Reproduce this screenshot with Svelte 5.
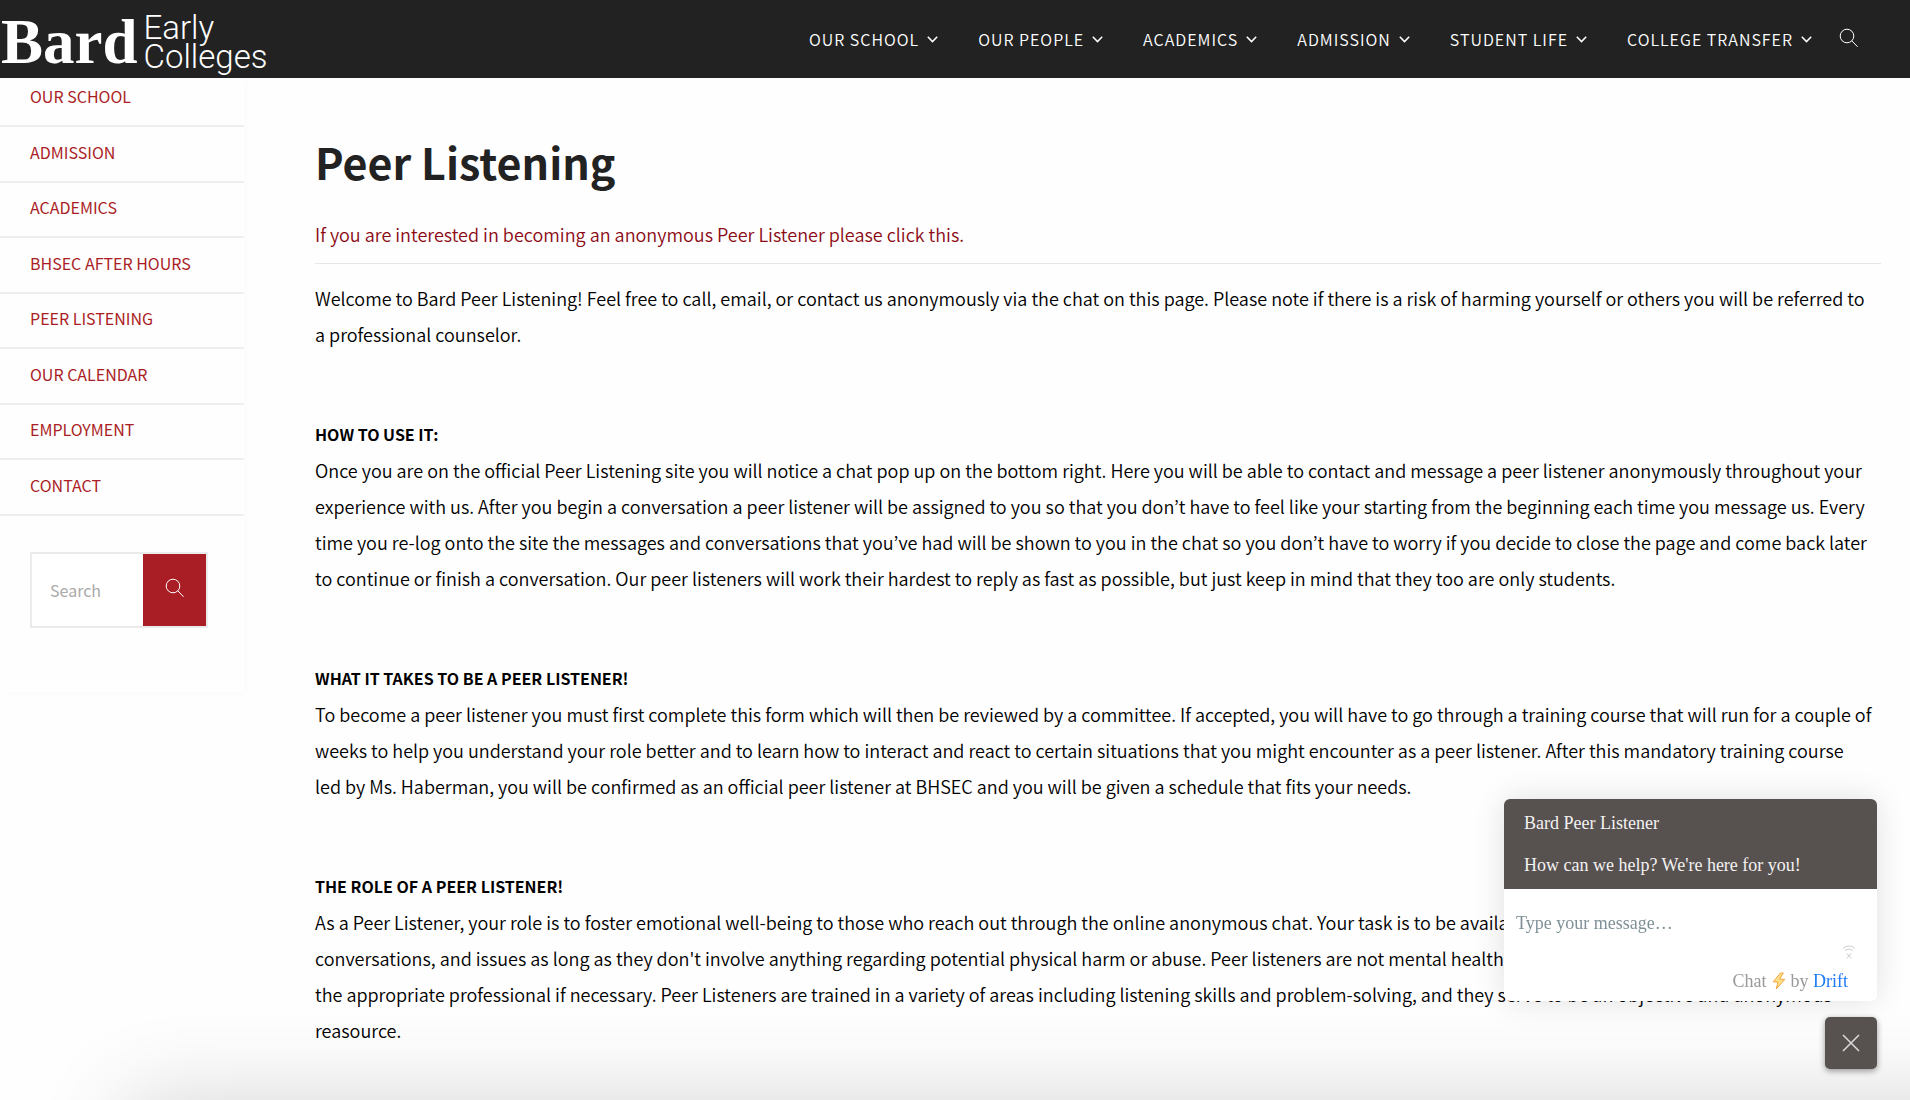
<script>
  const topLinks = ['Our School', 'Our People', 'Academics', 'Admission', 'Student Life', 'College Transfer'];
  const sideLinks = ['Our School', 'Admission', 'Academics', 'BHSEC After Hours', 'Peer Listening', 'Our Calendar', 'Employment', 'Contact'];
  const welcome = `Welcome to Bard Peer Listening! Feel free to call, email, or contact us anonymously via the chat on this page. Please note if there is a risk of harming yourself or others you will be referred to
a professional counselor.`;
  const sections = [
    {
      title: 'How to use it:',
      text: `Once you are on the official Peer Listening site you will notice a chat pop up on the bottom right. Here you will be able to contact and message a peer listener anonymously throughout your
experience with us. After you begin a conversation a peer listener will be assigned to you so that you don’t have to feel like your starting from the beginning each time you message us. Every
time you re-log onto the site the messages and conversations that you’ve had will be shown to you in the chat so you don’t have to worry if you decide to close the page and come back later
to continue or finish a conversation. Our peer listeners will work their hardest to reply as fast as possible, but just keep in mind that they too are only students.`
    },
    {
      title: 'What it takes to be a Peer Listener!',
      text: `To become a peer listener you must first complete this form which will then be reviewed by a committee. If accepted, you will have to go through a training course that will run for a couple of
weeks to help you understand your role better and to learn how to interact and react to certain situations that you might encounter as a peer listener. After this mandatory training course
led by Ms. Haberman, you will be confirmed as an official peer listener at BHSEC and you will be given a schedule that fits your needs.`
    },
    {
      title: 'The role of a Peer Listener!',
      text: `As a Peer Listener, your role is to foster emotional well-being to those who reach out through the online anonymous chat. Your task is to be available to listen to problems,
conversations, and issues as long as they don't involve anything regarding potential physical harm or abuse. Peer listeners are not mental health counselors, but will refer you to
the appropriate professional if necessary. Peer Listeners are trained in a variety of areas including listening skills and problem-solving, and they serve to be an objective and anonymous
reasource.`
    }
  ];
  let query = $state('');
  let message = $state('');
  let open = $state(true);
</script>

{#snippet magnifier()}
  <svg class="magnifier" viewBox="0 0 20 20" aria-hidden="true">
    <circle cx="8" cy="8" r="6.8" />
    <path d="M12.8 12.8 18.6 18.8" />
  </svg>
{/snippet}

<div class="page">
  <header class="topbar">
    <a class="logo" href="#home" aria-label="Bard Early Colleges">
      <span class="bard">Bard</span>
      <span class="early"><span>Early</span><span>Colleges</span></span>
    </a>
    <nav class="topnav" aria-label="Main">
      {#each topLinks as link}
        <a href="#top">{link}
          <svg class="chevron" viewBox="0 0 11 7" aria-hidden="true"><path d="M.8.8 5.5 5.6 10.2.8" /></svg>
        </a>
      {/each}
      <button class="find" aria-label="Open search">{@render magnifier()}</button>
    </nav>
  </header>

  <div class="body">
    <aside class="sidebar">
      <nav aria-label="Section">
        <ul>
          {#each sideLinks as link}
            <li><a href="#side">{link}</a></li>
          {/each}
        </ul>
      </nav>
      <form class="search" onsubmit={(e) => e.preventDefault()}>
        <input type="search" placeholder="Search" aria-label="Search" bind:value={query} />
        <button aria-label="Search">{@render magnifier()}</button>
      </form>
    </aside>

    <main>
      <h1>Peer Listening</h1>
      <p class="signup"><a href="#form">If you are interested in becoming an anonymous Peer Listener please click this.</a></p>
      <p class="copy">{welcome}</p>
      {#each sections as section}
        <section>
          <h2>{section.title}</h2>
          <p class="copy">{section.text}</p>
        </section>
      {/each}
    </main>
  </div>
  <div class="glow"></div>
</div>

<div class="widget">
  {#if open}
    <div class="chat">
      <div class="chat-head">
        <div>Bard Peer Listener</div>
        <div>How can we help? We're here for you!</div>
      </div>
      <div class="chat-body">
        <input type="text" placeholder="Type your message…" aria-label="Message" bind:value={message} />
        <svg class="offline" viewBox="0 0 14 14" aria-hidden="true">
          <path d="M1 3.6C4 .2 10 .2 13 3.6M3 6C5.2 3.6 8.8 3.6 11 6M4.7 8.3 9.3 13.3M9.3 8.3 4.7 13.3" />
        </svg>
        <div class="credit">
          <span>Chat</span>
          <svg class="bolt" viewBox="0 0 14 18" aria-hidden="true"><path d="M8.5 1 1.2 9.8 6 10 4.2 17 12.8 7.3 7.6 7.2 11.3 1Z" /></svg>
          <span>by <a href="#drift">Drift</a></span>
        </div>
      </div>
    </div>
  {/if}
  <button class="close" aria-label="Close chat" onclick={() => (open = !open)}>
    <svg viewBox="0 0 18 18" aria-hidden="true"><path d="M1 1 17 17M17 1 1 17" /></svg>
  </button>
</div>

<style>
  :global(body) {
    margin: 0;
    background: #fefefe;
  }
  .page {
    height: 100vh;
    overflow: hidden;
    font-family: 'Noto Sans CJK KR', 'Noto Sans', sans-serif;
    font-size: 18px;
    line-height: 36px;
    color: #000;
  }
  a {
    color: inherit;
    text-decoration: none;
  }
  button {
    border: 0;
    padding: 0;
    background: none;
    cursor: pointer;
  }
  svg {
    fill: none;
    stroke: currentColor;
    display: block;
  }
  .topbar {
    display: flex;
    justify-content: space-between;
    align-items: center;
    height: 78px;
    padding-right: 51px;
    background: #222;
    color: #fff;
  }
  .logo {
    display: flex;
    align-items: center;
    gap: 6px;
    padding-left: 1px;
  }
  .bard {
    font: bold 63px/78px 'Liberation Serif', serif;
    padding-top: 6px;
  }
  .early {
    display: flex;
    flex-direction: column;
    font: 300 33px/29px Roboto, 'Liberation Sans', sans-serif;
    padding-top: 5px;
  }
  .topnav {
    display: flex;
    align-items: center;
    gap: 40px;
    font-size: 16px;
    font-weight: 350;
    letter-spacing: 1px;
    text-transform: uppercase;
  }
  .topnav a {
    display: flex;
    align-items: center;
    gap: 8px;
  }
  .chevron {
    width: 11px;
    height: 7px;
    stroke-width: 1.5;
  }
  .magnifier {
    width: 20px;
    height: 20px;
    stroke-width: 1;
  }
  .find {
    color: #fff;
    margin-left: -13px;
    padding-bottom: 2px;
  }
  .body {
    display: flex;
    align-items: flex-start;
  }
  .sidebar {
    box-sizing: border-box;
    width: 244px;
    flex: none;
    padding-bottom: 64px;
    box-shadow: 3px 3px 6px rgba(0, 0, 0, 0.01);
  }
  .sidebar ul {
    list-style: none;
    margin: 0;
    padding: 0;
  }
  .sidebar li {
    padding: 7px 30px 11px;
    border-bottom: 2px solid #eee;
    font-size: 16px;
    line-height: 35px;
    color: #aa1d25;
    text-transform: uppercase;
  }
  .sidebar li:nth-child(even) {
    line-height: 36px;
  }
  .sidebar li:first-child {
    padding-top: 1px;
  }
  .search {
    display: flex;
    margin: 36px 36px 0 30px;
    border: 2px solid #ebebeb;
  }
  .search input {
    flex: 1;
    min-width: 0;
    height: 72px;
    box-sizing: border-box;
    border: 0;
    padding: 0 18px;
    background: #fff;
    font: inherit;
    font-size: 16px;
    outline: 0;
  }
  .search input::placeholder {
    color: #aaa;
    opacity: 1;
  }
  .search button {
    display: flex;
    justify-content: center;
    align-items: center;
    width: 63px;
    padding-bottom: 4px;
    background: #a91d25;
    color: #fff;
  }
  main {
    flex: 1;
    min-width: 0;
    padding: 47px 29px 0 71px;
  }
  h1 {
    margin: 0;
    font-size: 43px;
    line-height: 72px;
    font-weight: 700;
    color: #222;
  }
  p {
    margin: 0;
    font-weight: 350;
  }
  .copy {
    margin-right: -16px;
    white-space: pre-line;
  }
  .signup {
    margin: 19px 0 16px;
    padding-bottom: 11px;
    border-bottom: 1px solid #e6e6e6;
    color: #8b0a14;
  }
  section {
    margin-top: 64px;
  }
  h2 {
    margin: 0;
    font-size: 16px;
    line-height: 36px;
    font-weight: 700;
    text-transform: uppercase;
  }
  .glow {
    position: fixed;
    left: 125px;
    right: -150px;
    top: 100%;
    height: 150px;
    box-shadow: 0 0 90px rgba(0, 0, 0, 0.16);
  }
  .widget {
    position: fixed;
    right: 33px;
    bottom: 31px;
    display: flex;
    flex-direction: column;
    align-items: flex-end;
    gap: 16px;
    font-family: 'Liberation Serif', serif;
    font-size: 18px;
  }
  .chat {
    width: 373px;
    border-radius: 6px;
    overflow: hidden;
    background: #fff;
    box-shadow: 0 0 32px rgba(0, 0, 0, 0.12);
  }
  .chat-head {
    padding: 3px 20px;
    line-height: 42px;
    background: #575150;
    color: #f4f2f2;
  }
  .chat-body {
    display: flex;
    flex-direction: column;
    padding: 19px 12px 7px;
  }
  .chat-body input {
    border: 0;
    padding: 0;
    height: 30px;
    font: inherit;
    background: none;
    outline: 0;
  }
  .chat-body input::placeholder {
    color: #7f9097;
    opacity: 1;
  }
  .offline {
    width: 14px;
    height: 14px;
    margin: 7px 9px 0;
    align-self: flex-end;
    color: #ccc;
  }
  .credit {
    display: flex;
    justify-content: flex-end;
    align-items: center;
    gap: 5px;
    margin-top: 9px;
    padding-right: 17px;
    line-height: 26px;
    color: #999;
  }
  .credit a {
    color: #1f7cf5;
  }
  .bolt {
    width: 14px;
    height: 18px;
    fill: #ffe08a;
    stroke: #f3a33c;
  }
  .close {
    display: flex;
    justify-content: center;
    align-items: center;
    width: 52px;
    height: 52px;
    border-radius: 5px;
    background: #575150;
    color: #ddd;
    box-shadow: 0 2px 6px rgba(0, 0, 0, 0.4);
  }
  .close svg {
    width: 18px;
    height: 18px;
    stroke-width: 1.5;
  }
</style>
